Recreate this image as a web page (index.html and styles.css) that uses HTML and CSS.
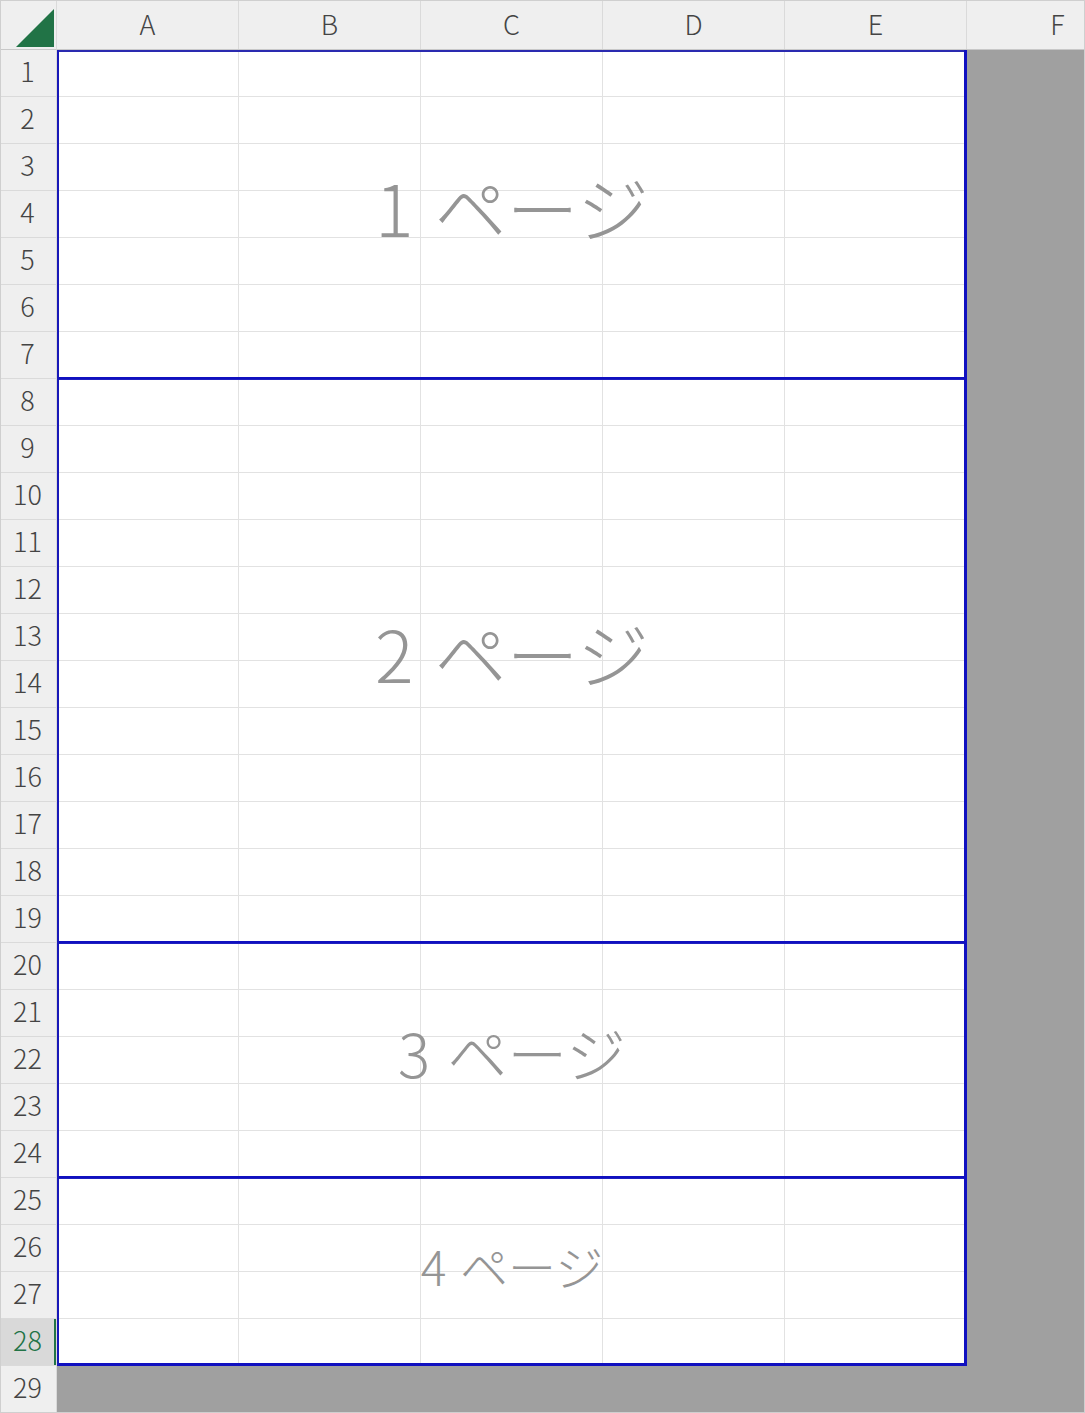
FILE: index.html
```html
<!DOCTYPE html>
<html lang="ja">
<head>
<meta charset="utf-8">
<title>改ページプレビュー</title>
<link rel="stylesheet" href="styles.css">
</head>
<body>
<div class="sheet">
  <div class="corner">
    <svg class="corner-tri" width="56" height="49" viewBox="0 0 56 49"><polygon points="53,8 53,46 15,46" fill="#217346"/></svg>
  </div>
  <div class="colheads">
    <div class="ch">A</div>
    <div class="ch">B</div>
    <div class="ch">C</div>
    <div class="ch">D</div>
    <div class="ch">E</div>
    <div class="ch">F</div>
  </div>
  <div class="rowheads">
    <div class="rh">1</div><div class="rh">2</div><div class="rh">3</div><div class="rh">4</div><div class="rh">5</div>
    <div class="rh">6</div><div class="rh">7</div><div class="rh">8</div><div class="rh">9</div><div class="rh">10</div>
    <div class="rh">11</div><div class="rh">12</div><div class="rh">13</div><div class="rh">14</div><div class="rh">15</div>
    <div class="rh">16</div><div class="rh">17</div><div class="rh">18</div><div class="rh">19</div><div class="rh">20</div>
    <div class="rh">21</div><div class="rh">22</div><div class="rh">23</div><div class="rh">24</div><div class="rh">25</div>
    <div class="rh">26</div><div class="rh">27</div><div class="rh rh-active">28</div><div class="rh">29</div>
  </div>
  <div class="body">
    <div class="print">
      <div class="page page-first rows-7"><span class="label label-lg">1 ページ</span></div>
      <div class="page rows-12"><span class="label label-lg">2 ページ</span></div>
      <div class="page rows-5"><span class="label label-md">3 ページ</span></div>
      <div class="page page-last rows-4"><span class="label label-sm">4 ページ</span></div>
    </div>
  </div>
</div>
</body>
</html>
```
FILE: styles.css
```css
* { box-sizing: border-box; }
html, body { margin: 0; padding: 0; background: #ffffff; }
body { width: 1085px; height: 1413px; overflow: hidden; }

.sheet {
  width: 1085px;
  height: 1413px;
  border: 1px solid #cfcfcf;
  display: grid;
  grid-template-columns: 56px 1fr;
  grid-template-rows: 49px 1fr;
  overflow: hidden;
  font-family: "Noto Sans CJK JP", "Noto Sans", sans-serif;
  background: #a0a0a0;
}

.corner {
  background: #efefef;
  border-right: 1px solid #dadada;
  border-bottom: 1px solid #c8c8c8;
}
.corner-tri { display: block; }

.colheads {
  display: flex;
  background: #efefef;
  border-bottom: 1px solid #c8c8c8;
  overflow: hidden;
}
.ch {
  flex: 0 0 182px;
  height: 100%;
  border-right: 1px solid #dadada;
  display: flex;
  align-items: center;
  justify-content: center;
  font-size: 27px;
  font-weight: 300;
  color: #444444;
  line-height: 1;
  padding-bottom: 3px;
}

.rowheads {
  display: flex;
  flex-direction: column;
  background: #efefef;
  border-right: 1px solid #dadada;
}
.rh {
  flex: 0 0 47px;
  border-bottom: 1px solid #dadada;
  display: flex;
  align-items: center;
  justify-content: center;
  font-size: 27px;
  font-weight: 300;
  color: #444444;
  line-height: 1;
  padding-right: 2px;
  padding-bottom: 5px;
}
.rh-active {
  background: #d9d9d9;
  color: #217346;
  box-shadow: inset -2px 0 0 #217346;
}

.body {
  background: #a0a0a0;
  overflow: hidden;
}
.print {
  width: 910px;
  display: flex;
  flex-direction: column;
}

.page {
  display: flex;
  align-items: center;
  justify-content: center;
  background-color: #ffffff;
  background-image:
    linear-gradient(to right, transparent 181px, #e2e2e2 181px),
    linear-gradient(to bottom, transparent 46px, #e2e2e2 46px);
  background-size: 182px 100%, 100% 47px;
  box-shadow: inset 2px 0 0 #1818b8, inset -3px 0 0 #1010c0, inset 0 -2px 0 #1010c0, inset 0 1px 0 #2020c0;
}
.page-first {
  box-shadow: inset 2px 0 0 #1818b8, inset -3px 0 0 #1010c0, inset 0 -2px 0 #1010c0, inset 0 2px 0 #2a2ab0;
}
.page-last {
  box-shadow: inset 2px 0 0 #1818b8, inset -3px 0 0 #1010c0, inset 0 -3px 0 #1010c0, inset 0 1px 0 #2020c0;
}
.rows-7 { height: 329px; }
.rows-12 { height: 564px; }
.rows-5 { height: 235px; }
.rows-4 { height: 188px; }

.label {
  color: #959595;
  font-weight: 300;
  line-height: 1;
  white-space: nowrap;
}
.label-lg { font-size: 72px; margin-top: -18px; word-spacing: 5px; }
.label-md { font-size: 60px; margin-top: -18px; word-spacing: 4px; }
.label-sm { font-size: 48px; margin-top: -14px; word-spacing: 3px; }
```
